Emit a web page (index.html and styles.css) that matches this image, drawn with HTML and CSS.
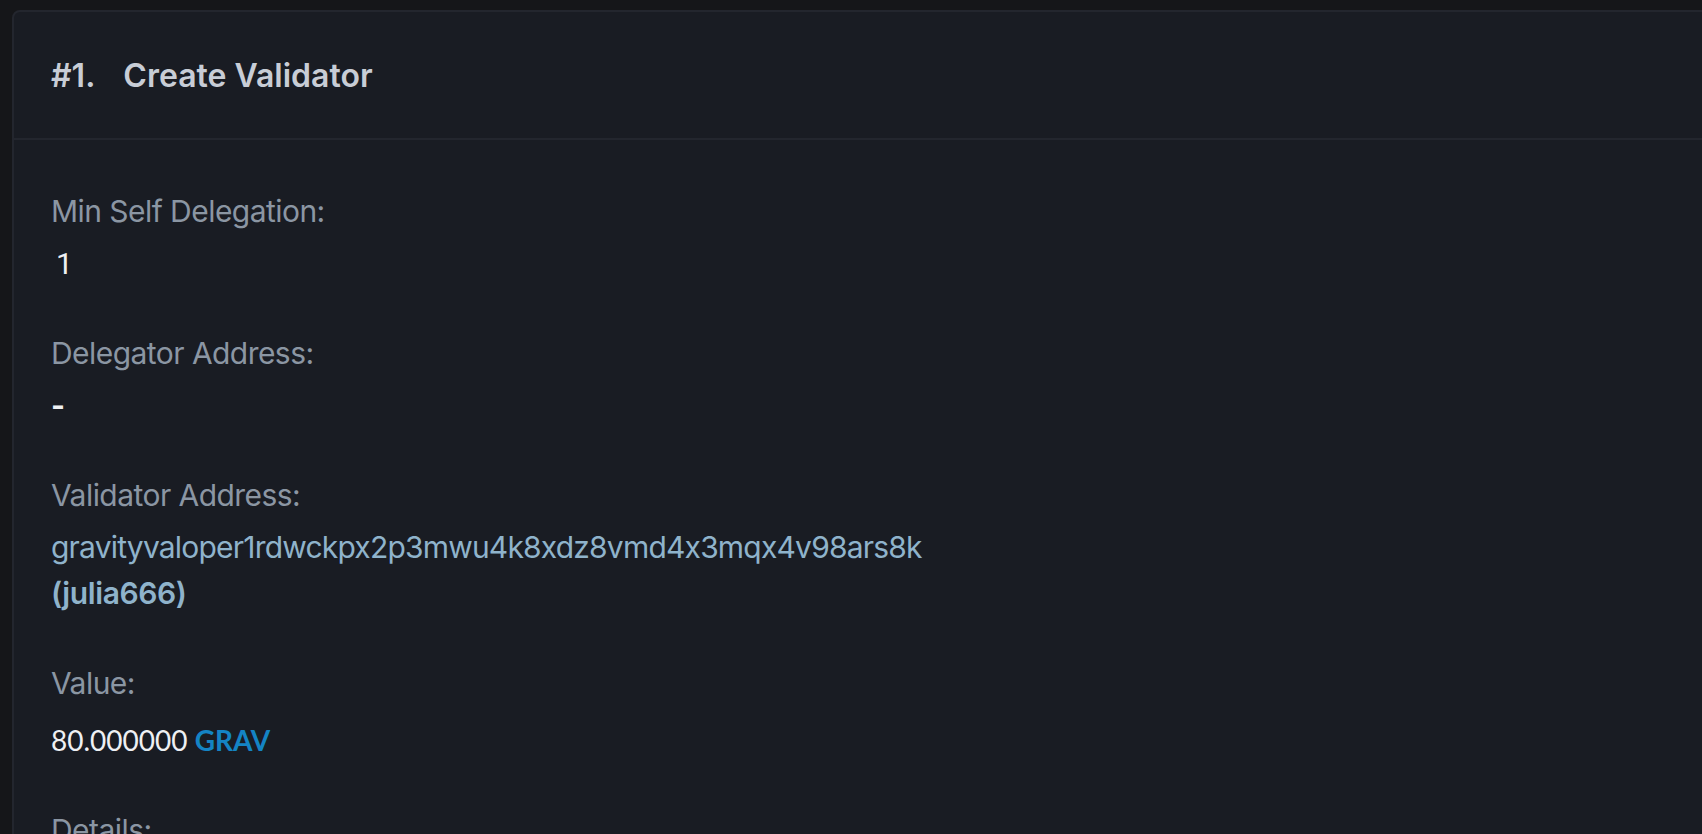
FILE: index.html
```html
<!DOCTYPE html>
<html lang="en">
<head>
    <meta charset="UTF-8">
    <meta name="viewport" content="width=device-width, initial-scale=1.0">
    <title>Create Validator</title>
    <link rel="stylesheet" href="styles.css">
</head>
<body>
    <div class="page">
        <div class="msg-card">
            <div class="msg-head">
                <span class="msg-index">#1.</span>
                <span class="msg-type">Create Validator</span>
            </div>
            <div class="msg-body">
                <div class="field">
                    <div class="field-label">Min Self Delegation:</div>
                    <div class="field-value num">1</div>
                </div>
                <div class="field">
                    <div class="field-label">Delegator Address:</div>
                    <div class="field-value dash">-</div>
                </div>
                <div class="field">
                    <div class="field-label">Validator Address:</div>
                    <div class="field-value link">
                        <div>gravityvaloper1rdwckpx2p3mwu4k8xdz8vmd4x3mqx4v98ars8k</div>
                        <div class="moniker">(julia666)</div>
                    </div>
                </div>
                <div class="field">
                    <div class="field-label">Value:</div>
                    <div class="field-value amount">80.000000 <span class="denom">GRAV</span></div>
                </div>
                <div class="field">
                    <div class="field-label">Details:</div>
                    <div class="field-value dash">-</div>
                </div>
            </div>
        </div>
    </div>
</body>
</html>
```

FILE: styles.css
```css
*{margin: 0;padding: 0;box-sizing: border-box;}
html,body{background: #151619;overflow: hidden;height: 100%;}
body{font-family: "Inter", "Liberation Sans", sans-serif;color: #eef0f3;font-feature-settings: "calt" 0;}

.page{padding: 10px 0 0 12px;width: 1780px;}

.msg-card{background: #191c23;border: 2px solid #23262e;border-radius: 8px;}
.msg-head{height: 128px;display: flex;align-items: center;padding: 0 37px;border-bottom: 2px solid #23262e;font-size: 32px;font-weight: 600;color: #c8cdd6;}
.msg-index{margin-right: 28px;}

.msg-body{padding: 49px 37px 40px;}
.field{margin-bottom: 47px;}
.field-label{font-size: 30px;line-height: 45px;color: #8b96a3;margin-bottom: 9px;letter-spacing: -0.55px;}
.field-value{font-size: 30px;line-height: 41px;color: #eef0f3;}
.field-value.num{font-family: "Roboto", sans-serif;padding-left: 5px;}
.field-value.dash{font-weight: 700;}
.field-value.link{color: #8fb3cb;letter-spacing: -0.8px;}
.moniker{font-weight: 600;margin-top: 5px;letter-spacing: -0.4px;}
.field-value.amount{font-family: "Lato", sans-serif;font-size: 28px;padding-top: 5px;letter-spacing: 0;}
.denom{color: #1484c4;font-weight: 700;}
```
